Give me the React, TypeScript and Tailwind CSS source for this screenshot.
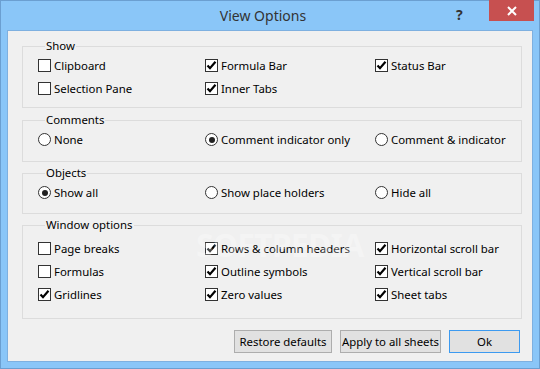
import React from "react";

const font = { fontFamily: '"Noto Sans", "Open Sans", sans-serif' };

function Check({ label, checked }: { label: string; checked?: boolean }) {
  return (
    <div className="flex h-[23px] items-center">
      <span className="flex h-[13px] w-[13px] shrink-0 items-center justify-center border border-[#333] bg-white">
        {checked && (
          <svg width="11" height="11" viewBox="0 0 11 11">
            <path d="M1.5 5.5 L4 8.2 L9.5 1.8" fill="none" stroke="#000" strokeWidth="2.2" />
          </svg>
        )}
      </span>
      <span className="ml-[3px] whitespace-nowrap">{label}</span>
    </div>
  );
}

function Radio({ label, checked }: { label: string; checked?: boolean }) {
  return (
    <div className="flex h-[23px] items-center">
      <span className="flex h-[13px] w-[13px] shrink-0 items-center justify-center rounded-full border border-[#333] bg-white">
        {checked && <span className="h-[6px] w-[6px] rounded-full bg-[#222]" />}
      </span>
      <span className="ml-[3px] whitespace-nowrap">{label}</span>
    </div>
  );
}

function Group({ title, className, children }: { title: string; className: string; children: React.ReactNode }) {
  return (
    <fieldset className={`border border-[#dcdcdc] pl-[15px] ${className}`}>
      <legend className="ml-[7px] h-[16px] px-[1px] leading-[16px]">{title}</legend>
      {children}
    </fieldset>
  );
}

const cols = "grid grid-cols-[167px_170px_1fr]";
const btn = "h-[23px] whitespace-nowrap border bg-[#e1e1e1] p-0";

export default function App() {
  return (
    <div className="relative h-[369px] w-[540px] border border-[#6b9fd1] bg-[#8ac6f8] text-[11.4px] text-black" style={font}>
      {/* title bar */}
      <div className="relative h-[29px]">
        <div className="pl-[180px] pt-[4px] text-center text-[14px] text-[#333]" style={{ width: 344 }}>
          View Options
        </div>
        <span className="absolute left-[455px] top-[3px] text-[14px] font-bold text-[#333]">?</span>
        <div className="absolute -top-[1px] right-[5px] flex h-[21px] w-[45px] items-center justify-center bg-[#c75050]">
          <svg width="10" height="10" viewBox="0 0 10 10">
            <path d="M1 1 L9 9 M9 1 L1 9" stroke="#fff" strokeWidth="2" />
          </svg>
        </div>
      </div>

      {/* client */}
      <div className="relative mx-[6px] h-[332px] border border-[#7eb0e0] bg-[#f0f0f0] pl-[14px] pr-[10px] pt-[7px]">
        <Group title="Show" className="pb-[7px]">
          <div className={cols}>
            <Check label="Clipboard" />
            <Check label="Formula Bar" checked />
            <Check label="Status Bar" checked />
            <Check label="Selection Pane" />
            <Check label="Inner Tabs" checked />
          </div>
        </Group>

        <Group title="Comments" className="mt-[4px] pb-[10px]">
          <div className={cols}>
            <Radio label="None" />
            <Radio label="Comment indicator only" checked />
            <Radio label="Comment & indicator" />
          </div>
        </Group>

        <Group title="Objects" className="mt-[3px] pb-[9px]">
          <div className={cols}>
            <Radio label="Show all" checked />
            <Radio label="Show place holders" />
            <Radio label="Hide all" />
          </div>
        </Group>

        <Group title="Window options" className="mt-[3px] pb-[12px]">
          <div className={`${cols} pt-[4px]`}>
            <Check label="Page breaks" />
            <Check label="Rows & column headers" checked />
            <Check label="Horizontal scroll bar" checked />
            <Check label="Formulas" />
            <Check label="Outline symbols" checked />
            <Check label="Vertical scroll bar" checked />
            <Check label="Gridlines" checked />
            <Check label="Zero values" checked />
            <Check label="Sheet tabs" checked />
          </div>
        </Group>

        <div className="mt-[11px] flex justify-end gap-[8px] pr-[2px]">
          <button className={`${btn} w-[98px] border-[#adadad]`}>Restore defaults</button>
          <button className={`${btn} w-[101px] border-[#adadad]`}>Apply to all sheets</button>
          <button className={`${btn} w-[71px] border-[#3c9af0]`}>Ok</button>
        </div>

        {/* watermark */}
        <span
          aria-hidden
          className="pointer-events-none absolute left-[188px] top-[190px] text-[32px] font-bold tracking-tight text-white/30"
        >
          SOFTPEDIA
        </span>
      </div>
    </div>
  );
}
